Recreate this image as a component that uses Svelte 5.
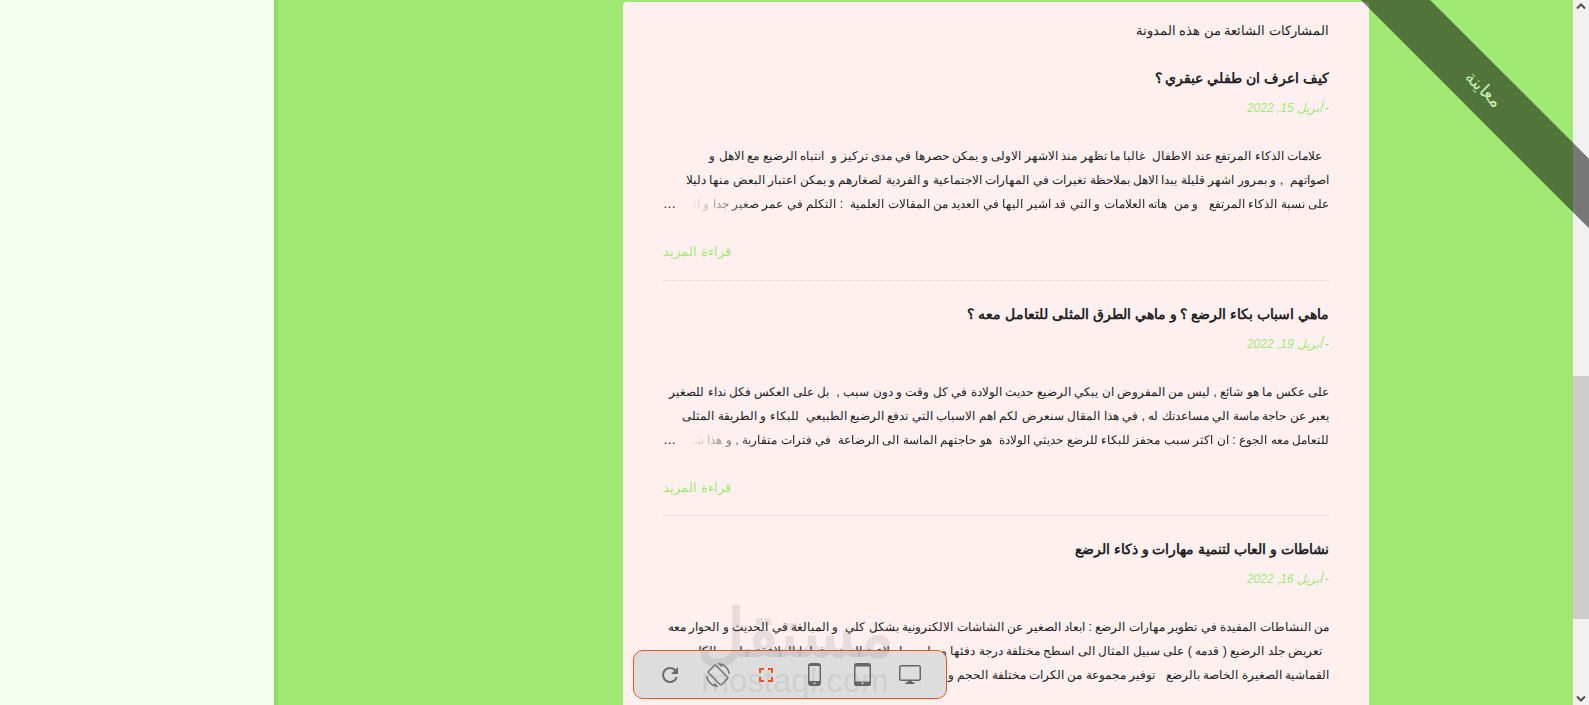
<script>
  const posts = [
    {
      title: 'كيف اعرف ان طفلي عبقري ؟',
      date: 'أبريل 15, 2022',
      lines: [
        '  علامات الذكاء المرتفع عند الاطفال  غالبا ما تظهر منذ الاشهر الاولى و يمكن حصرها في مدى تركيز و  انتباه الرضيع مع الاهل و',
        'اصواتهم  , و بمرور اشهر قليلة يبدا الاهل بملاحظة تغيرات في المهارات الاجتماعية و الفردية لصغارهم و يمكن اعتبار البعض منها دليلا',
        'على نسبة الذكاء المرتفع   و من  هاته العلامات و التي قد اشير اليها في العديد من المقالات العلمية  : التكلم في عمر صغير جدا و الحص'
      ]
    },
    {
      title: 'ماهي اسباب بكاء الرضع ؟ و ماهي الطرق المثلى للتعامل معه ؟',
      date: 'أبريل 19, 2022',
      lines: [
        'على عكس ما هو شائع , ليس من المفروض ان يبكي الرضيع حديث الولادة في كل وقت و دون سبب ,  بل على العكس فكل نداء للصغير',
        'يعبر عن حاجة ماسة الي مساعدتك له , في هذا المقال سنعرض لكم اهم الاسباب التي تدفع الرضيع الطبيعي  للبكاء و الطريقة المثلى',
        'للتعامل معه الجوع : ان اكثر سبب محفز للبكاء للرضع حديثي الولادة  هو حاجتهم الماسة الى الرضاعة  في فترات متقاربة , و هذا شئ'
      ]
    },
    {
      title: 'نشاطات و العاب لتنمية مهارات و ذكاء الرضع',
      date: 'أبريل 16, 2022',
      lines: [
        'من النشاطات المفيدة في تطوير مهارات الرضع : ابعاد الصغير عن الشاشات الالكترونية بشكل كلي  و المبالغة في الحديث و الحوار معه',
        '  تعريض جلد الرضيع ( قدمه ) على سبيل المثال الى اسطح مختلفة درجة دفئها و ملمسها ملاعبة الرضيع فعلها الملاعقة و ليس الكل',
        'القماشية الصغيرة الخاصة بالرضع   توفير مجموعة من الكرات مختلفة الحجم و'
      ]
    }
  ];
</script>

<div class="page">
  <div class="side"></div>
  <div class="stage">
    <main class="card" dir="rtl">
      <h3 class="head">المشاركات الشائعة من هذه المدونة</h3>
      {#each posts as post, i}
        <article class="post" class:first={i === 0} class:last={i === 2}>
          <h4 class="title">{post.title}</h4>
          <div class="date"><span class="dash">-</span><i>{post.date}</i></div>
          <div class="body">
            {#each post.lines as line, n}
              <div class="line" class:fade={n === 2 && i < 2}>{line}</div>
            {/each}
            {#if i < 2}<span class="dots">…</span>{/if}
          </div>
          {#if i < 2}<a class="more" href="#more">قراءة المزيد</a>{/if}
        </article>
      {/each}
    </main>
  </div>
  <div class="scrollbar">
    <svg class="arrow" width="16" height="16" viewBox="0 0 16 16"><path d="M4 8.5 8 4.5l4 4" fill="none" stroke="#505050" stroke-width="2"/></svg>
    <div class="thumb"></div>
    <svg class="arrow down" width="16" height="16" viewBox="0 0 16 16"><path d="M4 7.5 8 11.5l4-4" fill="none" stroke="#505050" stroke-width="2"/></svg>
  </div>

  <div class="ribbon"><span>معاينة</span></div>

  <div class="bar">
    <div class="cell"><svg width="24" height="24" viewBox="0 0 24 24"><path fill="#6a6a6a" d="M17.65 6.35A7.96 7.96 0 0 0 12 4a8 8 0 1 0 7.75 10h-2.08A6 6 0 1 1 12 6c1.66 0 3.14.69 4.22 1.78L13 11h7V4l-2.35 2.35z"/></svg></div>
    <div class="cell"><svg width="24" height="24" viewBox="0 0 24 24"><path fill="#777" d="M16.48 2.52c3.27 1.55 5.61 4.72 5.97 8.48h1.5C23.44 4.84 18.29 0 12 0l-.66.03 3.81 3.81 1.33-1.32zm-6.25-.77a1.49 1.49 0 0 0-2.12 0L1.75 8.11a1.49 1.49 0 0 0 0 2.12l12.02 12.02c.59.59 1.54.59 2.12 0l6.36-6.36c.59-.59.59-1.54 0-2.12L10.23 1.75zm4.6 19.44L2.81 9.17l6.36-6.36 12.02 12.02-6.36 6.36zm-7.31.29C4.25 19.94 1.91 16.76 1.55 13H.05C.56 19.16 5.71 24 12 24l.66-.03-3.81-3.81-1.33 1.32z"/></svg></div>
    <div class="cell"><svg width="14" height="14" viewBox="0 0 14 14"><path fill="none" stroke="#f4511e" stroke-width="2" d="M1 5V1h4M9 1h4v4M13 9v4H9M5 13H1V9"/></svg></div>
    <div class="cell"><svg width="13" height="23" viewBox="0 0 13 23"><rect x=".75" y=".75" width="11.5" height="21.5" rx="2.5" fill="none" stroke="#666" stroke-width="1.5"/><path fill="#666" d="M1 18h11v2.5a2 2 0 0 1-2 2H3a2 2 0 0 1-2-2zM1 2.5a2 2 0 0 1 2-2h7a2 2 0 0 1 2 2V3H1z"/><circle cx="6.5" cy="20.2" r="1" fill="#ddd"/></svg></div>
    <div class="cell"><svg width="17" height="23" viewBox="0 0 17 23"><rect x=".75" y=".75" width="15.5" height="21.5" rx="1.8" fill="none" stroke="#666" stroke-width="1.5"/><path fill="#666" d="M1 1h15v2.5H1zM1 18.5h15V22H1z"/><circle cx="8.5" cy="20.2" r="1" fill="#ddd"/></svg></div>
    <div class="cell"><svg width="22" height="19" viewBox="0 0 22 19"><rect x=".75" y=".75" width="20.5" height="14.5" rx="1.5" fill="none" stroke="#666" stroke-width="1.5"/><path fill="#666" d="M9 15.5h4v1.7h2.5V19h-9v-1.8H9z"/></svg></div>
  </div>

  <div class="mark">
    <div class="mark-ar">مستقل</div>
    <div class="mark-en">mostaql.com</div>
  </div>
</div>

<style>
  :global(body) { margin: 0; overflow: hidden; }
  .page {
    position: relative;
    display: flex;
    width: 1589px;
    height: 705px;
    overflow: hidden;
    font-family: "Liberation Sans", Arial, sans-serif;
  }
  .side { width: 274px; background: #f5fff0; flex: none; }
  .stage {
    flex: 1;
    background: #a0e975;
    border-left: 4px solid #8fde66;
    display: flex;
    padding-left: 345px;
    padding-top: 2px;
    min-width: 0;
  }
  .card {
    width: 746px;
    height: 760px;
    flex: none;
    box-sizing: border-box;
    background: #fff0f0;
    border-radius: 4px 4px 0 0;
    padding: 0 40px;
    color: #222;
  }
  .head {
    margin: 0;
    padding-top: 19px;
    font-size: 12.7px;
    line-height: 20px;
    font-weight: 400;
    color: #222;
  }
  .post { border-bottom: 1px dotted #d4d4d4; padding-top: 21px; height: 235px; box-sizing: border-box; }
  .post.first { padding-top: 25px; height: 240px; }
  .post.last { border-bottom: 0; }
  .title { margin: 0; font-size: 14px; line-height: 24px; font-weight: 700; color: #222; }
  .date { margin-top: 8px; font-size: 12px; line-height: 20px; color: #a0e975; }
  .dash { margin-left: 3px; color: #8fcf6a; }
  .body {
    position: relative;
    margin-top: 26px;
    font-size: 12.4px;
    line-height: 24px;
    color: #222;
    height: 72px;
    overflow: hidden;
  }
  .line { white-space: pre; }
  .fade {
    -webkit-mask-image: linear-gradient(to left, #000 86%, transparent 96%);
    mask-image: linear-gradient(to left, #000 86%, transparent 96%);
  }
  .dots { position: absolute; left: 0; bottom: 0; font-size: 13px; line-height: 24px; }
  .more {
    display: block;
    margin-top: 24px;
    font-size: 13.4px;
    line-height: 24px;
    color: #a0e975;
    text-decoration: none;
    text-align: left;
  }
  .scrollbar {
    width: 16px;
    flex: none;
    background: #f1f1f1;
    position: relative;
  }
  .arrow { position: absolute; left: 0; top: 0; display: block; }
  .arrow.down { top: auto; bottom: 0; }
  .thumb { position: absolute; left: 0; right: 0; top: 376px; height: 243px; background: #cdcdcd; }
  .ribbon {
    position: absolute;
    left: 1284px;
    top: 63.5px;
    width: 400px;
    height: 49px;
    background: rgba(0, 0, 0, 0.5);
    transform: rotate(45deg);
    display: flex;
    align-items: center;
    justify-content: center;
    color: #c5eeb0;
    font-size: 18px;
  }
  .mark {
    position: absolute;
    left: 695px;
    top: 598px;
    width: 200px;
    color: rgba(110, 110, 110, 0.15);
    text-align: center;
    font-weight: 700;
    pointer-events: none;
  }
  .mark-ar { font-size: 66px; line-height: 70px; }
  .mark-en { font-size: 33px; line-height: 36px; margin-top: -5px; font-weight: 400; }
  .bar {
    position: absolute;
    left: 633px;
    top: 650px;
    width: 314px;
    height: 49px;
    box-sizing: border-box;
    background: #dddddd;
    border: 1px solid #f4511e;
    border-radius: 10px;
    display: flex;
    align-items: center;
    justify-content: center;
  }
  .cell { width: 48px; display: flex; align-items: center; justify-content: center; }
  .cell svg { display: block; }
</style>
